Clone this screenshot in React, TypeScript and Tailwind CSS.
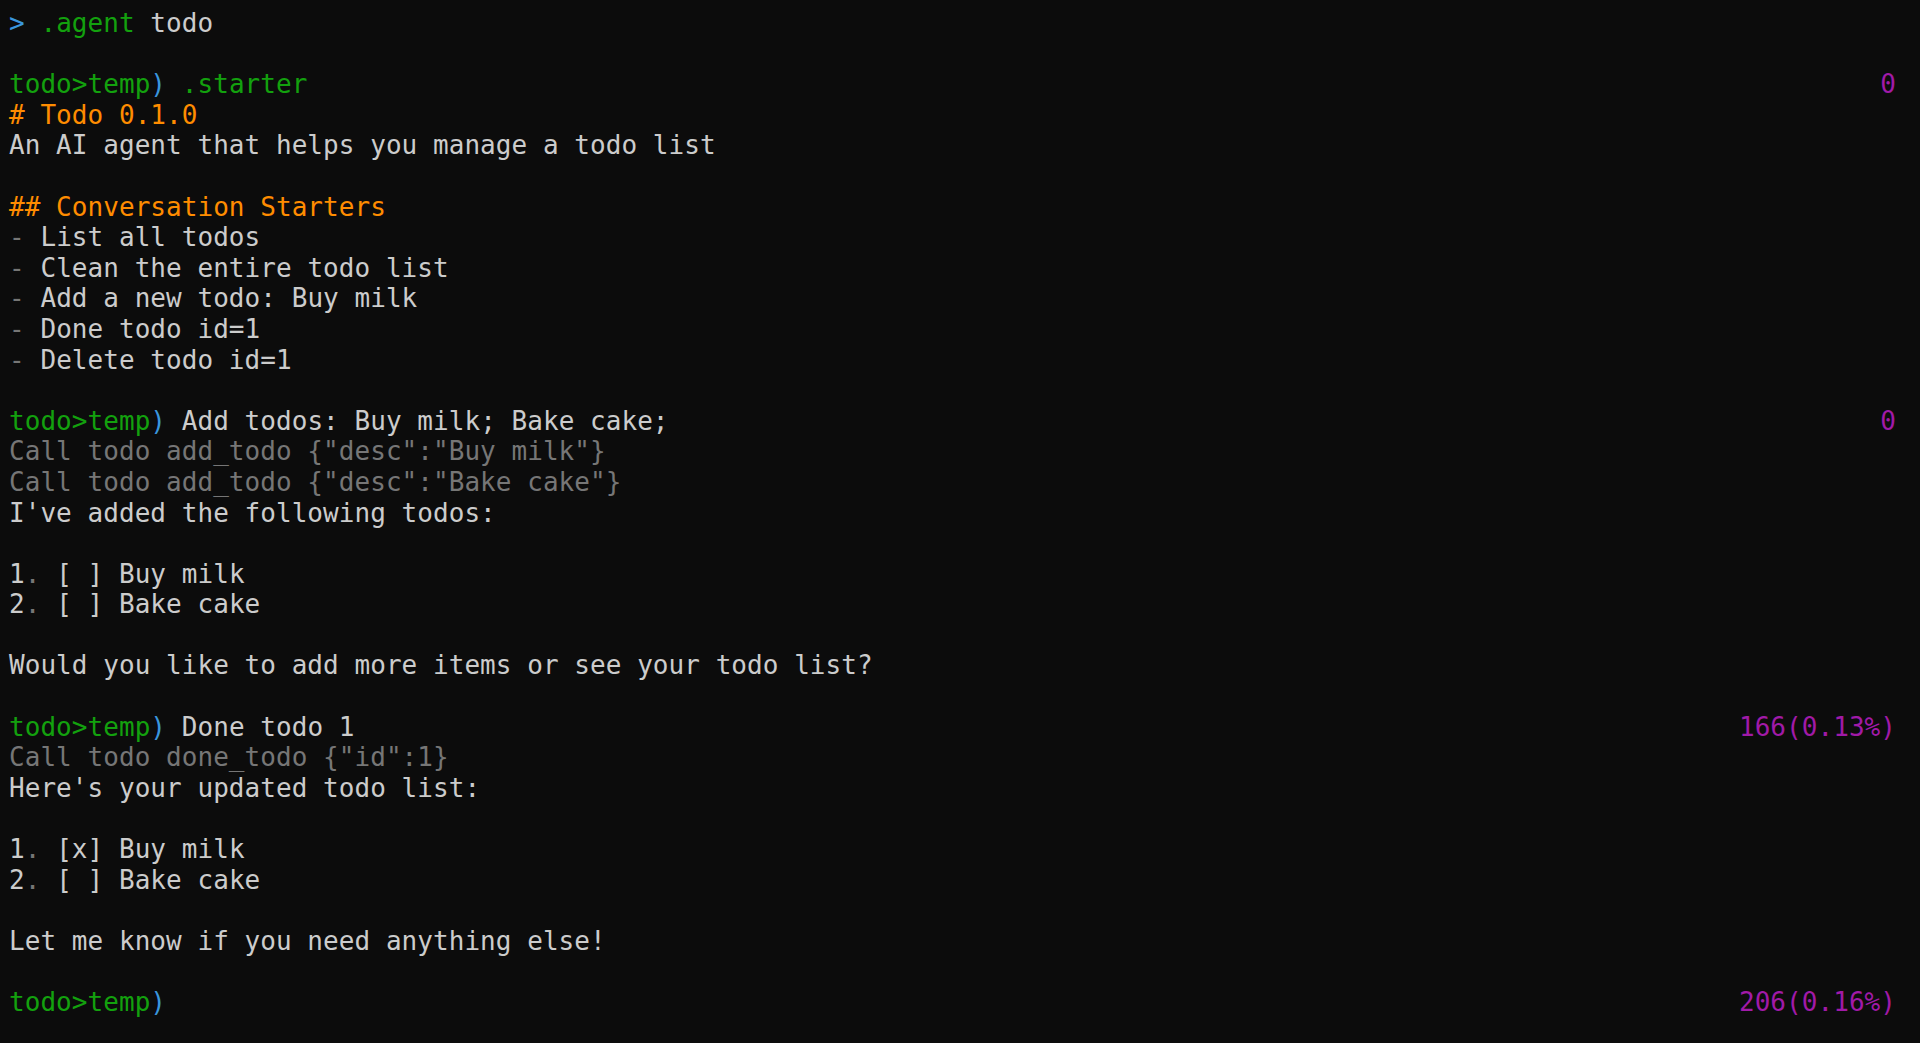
import React from 'react';

type Seg = { t: string; c?: string };
type Line = { segs: Seg[]; right?: string };

const G = 'text-[#13a10e]';
const B = 'text-[#3a96dd]';
const O = 'text-[#ff8c00]';
const D = 'text-[#767676]';

const prompt = (rest?: Seg[]): Seg[] => [
  { t: 'todo>temp', c: G },
  { t: ')', c: B },
  ...(rest ?? []),
];

const numbered = (n: string, rest: string): Seg[] => [
  { t: n },
  { t: '.', c: D },
  { t: ' ' + rest },
];

const lines: Line[] = [
  { segs: [{ t: '>', c: B }, { t: ' .agent', c: G }, { t: ' todo' }] },
  { segs: [] },
  { segs: prompt([{ t: ' .starter', c: G }]), right: '0' },
  { segs: [{ t: '# Todo 0.1.0', c: O }] },
  { segs: [{ t: 'An AI agent that helps you manage a todo list' }] },
  { segs: [] },
  { segs: [{ t: '## Conversation Starters', c: O }] },
  { segs: [{ t: '-', c: D }, { t: ' List all todos' }] },
  { segs: [{ t: '-', c: D }, { t: ' Clean the entire todo list' }] },
  { segs: [{ t: '-', c: D }, { t: ' Add a new todo: Buy milk' }] },
  { segs: [{ t: '-', c: D }, { t: ' Done todo id=1' }] },
  { segs: [{ t: '-', c: D }, { t: ' Delete todo id=1' }] },
  { segs: [] },
  { segs: prompt([{ t: ' Add todos: Buy milk; Bake cake;' }]), right: '0' },
  { segs: [{ t: 'Call todo add_todo {"desc":"Buy milk"}', c: D }] },
  { segs: [{ t: 'Call todo add_todo {"desc":"Bake cake"}', c: D }] },
  { segs: [{ t: "I've added the following todos:" }] },
  { segs: [] },
  { segs: numbered('1', '[ ] Buy milk') },
  { segs: numbered('2', '[ ] Bake cake') },
  { segs: [] },
  { segs: [{ t: 'Would you like to add more items or see your todo list?' }] },
  { segs: [] },
  { segs: prompt([{ t: ' Done todo 1' }]), right: '166(0.13%)' },
  { segs: [{ t: 'Call todo done_todo {"id":1}', c: D }] },
  { segs: [{ t: "Here's your updated todo list:" }] },
  { segs: [] },
  { segs: numbered('1', '[x] Buy milk') },
  { segs: numbered('2', '[ ] Bake cake') },
  { segs: [] },
  { segs: [{ t: 'Let me know if you need anything else!' }] },
  { segs: [] },
  { segs: prompt(), right: '206(0.16%)' },
];

export default function App() {
  return (
    <div className="min-h-[1043px] w-full bg-[#0c0c0c] pl-[9px] pr-[24px] pt-[8px] text-[#cccccc] font-['DejaVu_Sans_Mono','Liberation_Mono',monospace] text-[26px] leading-[30.6px] tracking-[0.05px] overflow-hidden">
      {lines.map((line, i) => (
        <div key={i} className="flex h-[30.6px] justify-between whitespace-pre">
          <span>
            {line.segs.map((s, j) => (
              <span key={j} className={s.c}>
                {s.t}
              </span>
            ))}
          </span>
          {line.right && <span className="text-[#a11aa8]">{line.right}</span>}
        </div>
      ))}
    </div>
  );
}
